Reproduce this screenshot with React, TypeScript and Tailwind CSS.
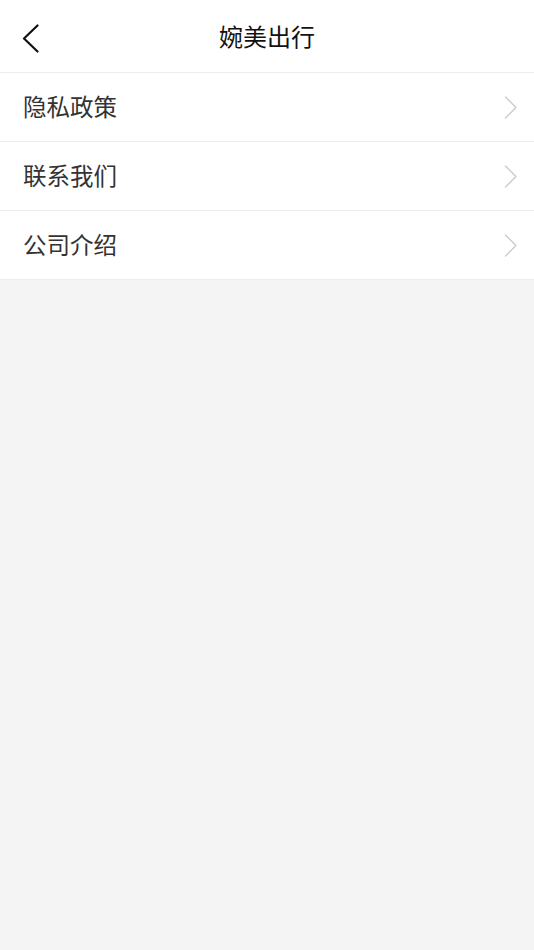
const items = ["隐私政策", "联系我们", "公司介绍"];

function BackArrow() {
  return (
    <svg width="17" height="29" viewBox="0 0 17 29" fill="none" className="absolute left-[22px] top-[24px]">
      <polyline points="15.5,1.5 2,14.5 15.5,27.5" stroke="#111111" strokeWidth="2.2" strokeLinecap="round" strokeLinejoin="round" />
    </svg>
  );
}

function RowArrow() {
  return (
    <svg width="13" height="23" viewBox="0 0 13 23" fill="none">
      <polyline points="1.5,1 12,11.5 1.5,22" stroke="#cccccc" strokeWidth="1.4" strokeLinecap="round" strokeLinejoin="round" />
    </svg>
  );
}

export default function App() {
  return (
    <div
      className="flex min-h-[950px] w-full flex-col bg-[#f4f4f4]"
      style={{ fontFamily: '"Noto Sans CJK SC", "Noto Sans", sans-serif' }}
    >
      {/* Top bar with back arrow and centered title */}
      <div className="relative flex h-[73px] items-center justify-center border-b border-[#ececec] bg-white">
        <BackArrow />
        <h1 className="text-[24px] font-normal leading-none text-[#111111]">婉美出行</h1>
      </div>

      <div className="flex flex-col bg-white">
        {items.map((item) => (
          <div
            key={item}
            className="flex h-[69px] items-center justify-between border-b border-[#ececec] pl-[23px] pr-[17px]"
          >
            <span className="text-[23.5px] leading-none text-[#333333]">{item}</span>
            <RowArrow />
          </div>
        ))}
      </div>
    </div>
  );
}
